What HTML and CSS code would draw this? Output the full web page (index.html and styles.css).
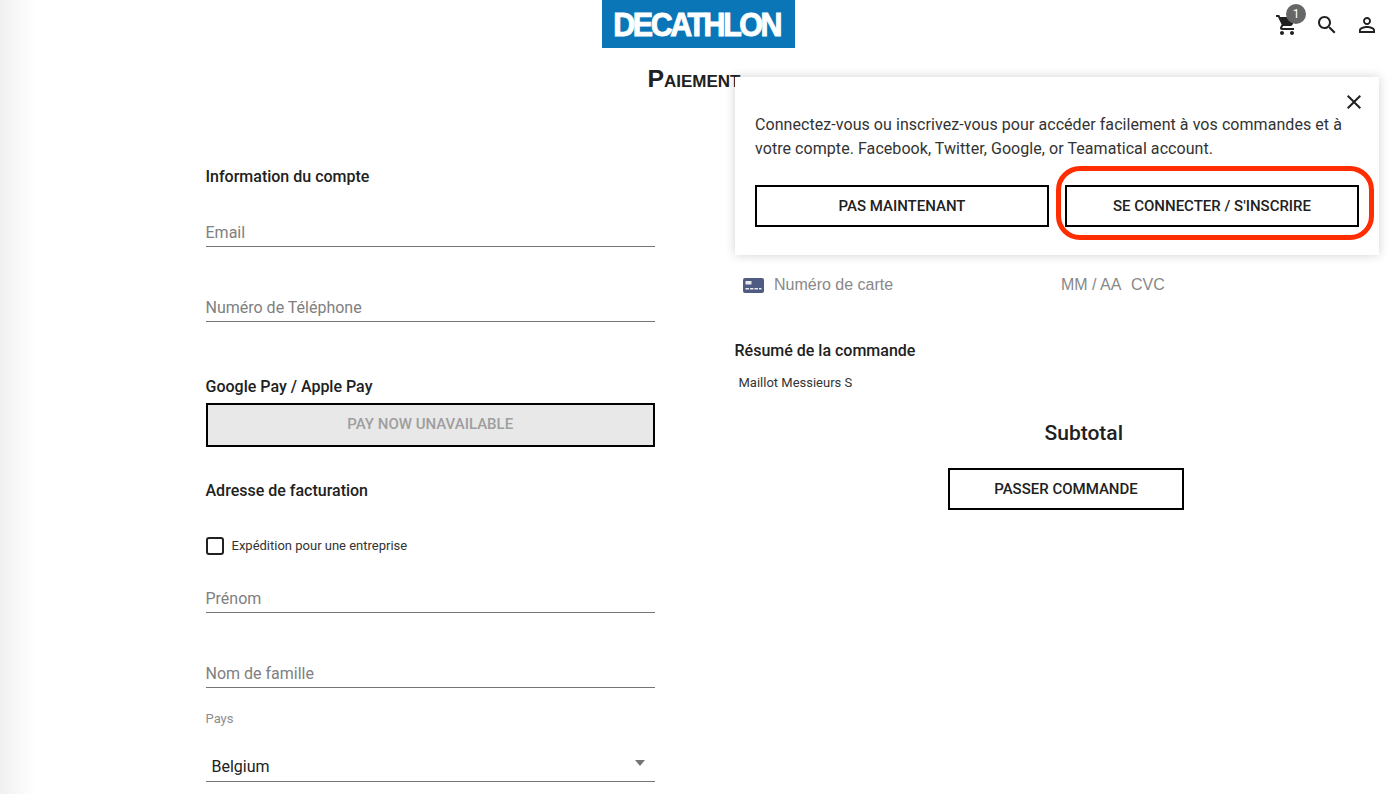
FILE: index.html
```html
<!DOCTYPE html>
<html lang="fr">
<head>
<meta charset="utf-8">
<title>Paiement</title>
<link rel="stylesheet" href="styles.css">
</head>
<body>
<div class="page">
  <div class="edge-shade"></div>
  <header class="topbar">
    <div class="topbar-side"></div>
    <a class="logo"><span class="logo-text">DECATHLON</span></a>
    <nav class="topbar-icons">
      <span class="icon-btn cart">
        <svg viewBox="0 0 24 24" width="24" height="24"><path d="M7 18c-1.100 0-1.990.9-1.990 2S5.900 22 7 22s2-.9 2-2-.9-2-2-2zM1 2v2h2l3.600 7.590-1.350 2.450c-.16.28-.25.61-.25.96 0 1.100.9 2 2 2h12v-2H7.420c-.14 0-.25-.11-.25-.25l.03-.12.9-1.630h7.450c.75 0 1.410-.41 1.750-1.030l3.580-6.490c.08-.14.12-.31.12-.48 0-.55-.45-1-1-1H5.210l-.94-2H1zm16 16c-1.100 0-1.990.9-1.990 2s.89 2 1.990 2 2-.9 2-2-.9-2-2-2z"/></svg>
        <span class="badge">1</span>
      </span>
      <span class="icon-btn">
        <svg viewBox="0 0 24 24" width="24" height="24"><path d="M15.500 14h-.79l-.28-.27C15.410 12.590 16 11.110 16 9.500 16 5.910 13.090 3 9.500 3S3 5.910 3 9.500 5.910 16 9.500 16c1.610 0 3.090-.59 4.230-1.570l.27.28v.79l5 4.990L20.490 19l-4.990-5zm-6 0C7.010 14 5 11.990 5 9.500S7.010 5 9.500 5 14 7.010 14 9.500 11.990 14 9.500 14z"/></svg>
      </span>
      <span class="icon-btn">
        <svg viewBox="0 0 24 24" width="24" height="24"><path d="M12 5.900c1.160 0 2.100.94 2.100 2.100s-.94 2.100-2.100 2.100S9.900 9.160 9.900 8s.94-2.100 2.100-2.100m0 9c2.970 0 6.100 1.460 6.100 2.100v1.100H5.900V17c0-.64 3.130-2.100 6.100-2.100M12 4C9.790 4 8 5.790 8 8s1.790 4 4 4 4-1.790 4-4-1.790-4-4-4zm0 9c-2.670 0-8 1.340-8 4v3h16v-3c0-2.660-5.330-4-8-4z"/></svg>
      </span>
    </nav>
  </header>

  <h1 class="page-title">Paiement</h1>

  <main class="checkout">
    <section class="col-left">
      <h2 class="section-title">Information du compte</h2>
      <div class="field field-first"><span class="placeholder">Email</span></div>
      <div class="field"><span class="placeholder">Numéro de Téléphone</span></div>

      <h2 class="section-title wallet-title">Google Pay / Apple Pay</h2>
      <button class="btn btn-disabled" type="button">PAY NOW UNAVAILABLE</button>

      <h2 class="section-title billing-title">Adresse de facturation</h2>
      <label class="check-row"><span class="checkbox"></span><span class="check-label">Expédition pour une entreprise</span></label>
      <div class="field field-after-check"><span class="placeholder">Prénom</span></div>
      <div class="field"><span class="placeholder">Nom de famille</span></div>
      <div class="select-label">Pays</div>
      <div class="field select-field"><span class="select-value">Belgium</span><span class="select-arrow"></span></div>
    </section>

    <section class="col-right">
      <div class="card-row">
        <svg class="card-icon" viewBox="0 0 21 15" width="21" height="15"><rect width="21" height="15" rx="2" fill="#4f5b80"/><rect x="2.500" y="3" width="6" height="3.500" fill="#e8eaf0"/><rect x="2.500" y="10" width="3.500" height="1.500" fill="#e8eaf0"/><rect x="7" y="10" width="3.500" height="1.500" fill="#e8eaf0"/><rect x="11.500" y="10" width="3.500" height="1.500" fill="#e8eaf0"/><rect x="16" y="10" width="2.500" height="1.500" fill="#e8eaf0"/></svg>
        <span class="card-number">Numéro de carte</span>
        <span class="card-date">MM / AA</span>
        <span class="card-cvc">CVC</span>
      </div>
      <h2 class="section-title summary-title">Résumé de la commande</h2>
      <div class="summary-line">Maillot Messieurs S</div>
      <div class="subtotal">Subtotal</div>
      <button class="btn btn-order" type="button">PASSER COMMANDE</button>
    </section>
  </main>

  <aside class="login-popup">
    <svg class="popup-close" viewBox="0 0 24 24" width="24" height="24"><path d="M19 6.410L17.590 5 12 10.590 6.410 5 5 6.410 10.590 12 5 17.590 6.410 19 12 13.410 17.590 19 19 17.590 13.410 12z"/></svg>
    <p class="popup-text">Connectez-vous ou inscrivez-vous pour accéder facilement à vos commandes et à votre compte. Facebook, Twitter, Google, or Teamatical account.</p>
    <div class="popup-actions">
      <button class="btn btn-popup" type="button">PAS MAINTENANT</button>
      <button class="btn btn-popup" type="button">SE CONNECTER / S'INSCRIRE</button>
    </div>
    <div class="red-ring"></div>
  </aside>
</div>
</body>
</html>
```
FILE: styles.css
```css
* { box-sizing: border-box; }
html, body { margin: 0; padding: 0; background: #fff; }
body { font-family: Roboto, "Liberation Sans", sans-serif; color: #212121; }
.page { position: relative; width: 1391px; height: 794px; overflow: hidden; }
.edge-shade { position: absolute; left: 0; top: 0; bottom: 0; width: 36px; background: linear-gradient(to right, #f0f0f0, #f7f7f7 45%, #ffffff); }

.topbar { position: relative; display: grid; grid-template-columns: 1fr auto 1fr; height: 48px; padding-left: 6px; }
.logo { display: flex; align-items: center; justify-content: center; width: 193px; height: 48px; background: #0a76b8; }
.logo-text { flex: none; font-family: "Liberation Sans", sans-serif; font-weight: 700; font-size: 33px; letter-spacing: -2.600px; color: #fff; -webkit-text-stroke: 1px #fff; line-height: 1; margin-right: 3px; transform: scaleX(.92); }
.topbar-icons { display: flex; justify-content: flex-end; gap: 16px; padding: 13px 12px 0 0; }
.icon-btn { position: relative; display: block; width: 24px; height: 24px; }
.icon-btn svg { display: block; fill: #212121; }
.badge { position: absolute; left: 11px; top: -9px; width: 20px; height: 20px; border-radius: 50%; background: #666; color: #fff; font-size: 12px; line-height: 20px; text-align: center; }

.page-title { margin: 17px 0 0; height: 28px; padding-right: 3px; font-family: "Liberation Sans", sans-serif; font-size: 24.800px; font-weight: 700; font-variant: small-caps; line-height: 28px; text-align: center; color: #212121; }

.checkout { display: grid; grid-template-columns: 449.5px 1fr; column-gap: 79.5px; margin-top: 73px; padding-left: 205.5px; padding-right: 12px; }
.section-title { margin: 0; height: 20px; font-size: 16px; font-weight: 500; line-height: 22px; color: #212121; }

.field { display: flex; align-items: flex-end; justify-content: space-between; height: 75px; border-bottom: 1px solid #757575; padding-bottom: 4px; }
.field-first { height: 61px; }
.field-after-check { height: 58px; }
.placeholder { font-size: 16px; line-height: 18px; color: #808080; }

.wallet-title { margin-top: 54px; }
.btn { display: block; font-family: Roboto, "Liberation Sans", sans-serif; font-size: 15px; font-weight: 500; background: #fff; color: #212121; border: 2px solid #000; border-radius: 0; padding: 0; text-align: center; }
.btn-disabled { width: 100%; height: 44px; margin-top: 7px; padding-bottom: 2px; background: #e8e8e8; color: #9e9e9e; }
.billing-title { margin-top: 33px; }

.check-row { display: flex; align-items: center; gap: 8px; height: 18px; margin-top: 37px; }
.checkbox { display: block; width: 18px; height: 18px; border: 2px solid #212121; border-radius: 3px; }
.check-label { font-size: 13px; line-height: 18px; color: #333; }

.select-label { margin-top: 24px; height: 12px; font-size: 13px; line-height: 14px; color: #8c8c8c; }
.select-field { height: 58px; padding-left: 6px; padding-right: 10px; padding-bottom: 4px; position: relative; }
.select-value { font-size: 16px; line-height: 20px; color: #212121; }
.select-arrow { align-self: flex-start; margin-top: 36px; width: 0; height: 0; border-left: 5.500px solid transparent; border-right: 5.500px solid transparent; border-top: 6px solid #757575; }

.card-row { position: relative; display: flex; align-items: center; height: 20px; margin-top: 109px; padding-left: 8px; font-family: "Liberation Sans", sans-serif; font-size: 16px; line-height: 22px; color: #888; }
.card-icon { display: block; flex: none; }
.card-number { margin-left: 10.500px; width: 287px; }
.card-date { width: 70px; }
.summary-title { margin-top: 45px; }
.summary-line { margin-top: 14px; padding-left: 4px; font-size: 13px; line-height: 17px; color: #333; }
.subtotal { margin-top: 28px; margin-left: 310px; font-size: 21px; font-weight: 500; line-height: 28px; color: #212121; letter-spacing: 0; }
.btn-order { width: 236px; height: 42px; margin: 21px 0 0 213.500px; }

.login-popup { position: absolute; left: 735px; top: 77px; width: 644px; height: 178px; padding: 36px 20px 0; background: #fff; box-shadow: 0 0 10px rgba(0,0,0,.18); }
.popup-close { position: absolute; right: 13px; top: 13px; fill: #212121; }
.popup-text { margin: 0; font-size: 16px; letter-spacing: .06px; line-height: 24px; color: #333; }
.popup-actions { display: flex; gap: 16px; margin-top: 24px; }
.btn-popup { width: 294px; height: 42px; }
.red-ring { position: absolute; left: 321px; top: 89px; width: 318px; height: 74px; border: 5px solid #ff2d00; border-radius: 24px; pointer-events: none; }
```
